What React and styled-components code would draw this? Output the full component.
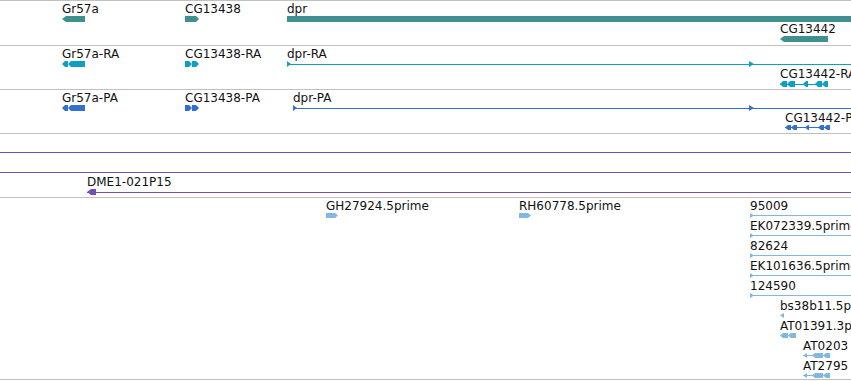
import React from "react";
import styled, { createGlobalStyle } from "styled-components";

const GlobalStyle = createGlobalStyle`
  html, body {
    margin: 0;
    padding: 0;
    background: #ffffff;
    overflow: hidden;
  }
  body {
    font-family: "DejaVu Sans", "Liberation Sans", sans-serif;
  }
`;

const Panel = styled.div`
  width: 851px;
  display: flex;
  flex-direction: column;
  overflow: hidden;
`;

const Track = styled.div`
  box-sizing: border-box;
  height: ${(p) => p.h}px;
  padding-top: 2px;
  border-top: 1px solid #c0c0c0;
  border-bottom: ${(p) => (p.last ? "1px solid #c0c0c0" : "none")};
  display: flex;
  flex-direction: column;
  overflow: hidden;
`;

// one packing row of a track; features sit at their genomic x inside it
const Row = styled.div`
  position: relative;
  flex: 0 0 20px;
  height: 20px;
`;

const FeatureBox = styled.div`
  position: absolute;
  left: ${(p) => p.x}px;
  top: 0;
  display: flex;
  flex-direction: column;
  gap: 1px;
`;

const Label = styled.span`
  display: block;
  height: 12px;
  font-size: 12px;
  line-height: 12px;
  color: #111;
  white-space: nowrap;
`;

const GlyphSvg = styled.svg`
  display: block;
  overflow: visible;
`;

const COLORS = {
  gene: "#409090",
  mrna: "#0ea0c0",
  protein: "#3470d0",
  bac: "#7050b0",
  est: "#80b8e0",
};

// polygon for an exon block; dir: left/right arrow, tri-left/tri-right triangle, none box
function shape(x0, x1, dir, h, tip = 3) {
  const m = h / 2;
  const w = x1 - x0;
  if (dir === "left")
    return `${x0},${m} ${x0 + tip},0 ${x1},0 ${x1},${h} ${x0 + tip},${h}`;
  if (dir === "right")
    return `${x0},0 ${x1 - tip},0 ${x1},${m} ${x1 - tip},${h} ${x0},${h}`;
  if (dir === "tri-right") return `${x0},0 ${x0 + w},${m} ${x0},${h}`;
  if (dir === "tri-left") return `${x1},0 ${x0},${m} ${x1},${h}`;
  return `${x0},0 ${x1},0 ${x1},${h} ${x0},${h}`;
}

function Feature({ x, label = "", color, parts = [], line, h = 6 }) {
  const ends = [...parts.map((p) => p[1]), line ? line[1] : 0];
  const width = Math.max(...ends) - x;
  return (
    <FeatureBox x={x}>
      <Label>{label}</Label>
      <GlyphSvg width={width} height={h}>
        {line && (
          <rect
            x={line[0] - x}
            y={Math.floor(h / 2)}
            width={line[1] - line[0]}
            height={1}
            fill={color}
          />
        )}
        {parts.map(([a, b, dir, tip], i) => (
          <polygon key={i} points={shape(a - x, b - x, dir, h, tip)} fill={color} />
        ))}
      </GlyphSvg>
    </FeatureBox>
  );
}

const twoExonsLeft = [
  [62, 68, "left"],
  [68, 85, "left"],
];
const twoExonsRight = [
  [185, 192, "right"],
  [192, 199, "right"],
];
const spliced = [
  [803, 807, "tri-left"],
  [812, 823, "left"],
  [823, 830, "left"],
];

const EstRow = ({ label, children }) => (
  <Row>
    {children}
    <Feature
      x={750}
      label={label}
      color={COLORS.est}
      h={5}
      line={[750, 900]}
      parts={[[750, 754, "tri-right"]]}
    />
  </Row>
);

export default function App() {
  return (
    <>
      <GlobalStyle />
      <Panel>
        <Track h={45}>
          <Row>
            <Feature x={62} label="Gr57a" color={COLORS.gene} parts={[[62, 85, "left", 4]]} />
            <Feature x={185} label="CG13438" color={COLORS.gene} parts={[[185, 199, "right"]]} />
            <Feature x={287} label="dpr" color={COLORS.gene} parts={[[287, 900, "none"]]} />
          </Row>
          <Row>
            <Feature x={780} label="CG13442" color={COLORS.gene} parts={[[780, 828, "left", 4]]} />
          </Row>
        </Track>

        <Track h={44}>
          <Row>
            <Feature x={62} label="Gr57a-RA" color={COLORS.mrna} parts={twoExonsLeft} />
            <Feature x={185} label="CG13438-RA" color={COLORS.mrna} parts={twoExonsRight} />
            <Feature
              x={287}
              label="dpr-RA"
              color={COLORS.mrna}
              line={[287, 900]}
              parts={[
                [287, 291, "tri-right"],
                [749, 754, "tri-right"],
              ]}
            />
          </Row>
          <Row>
            <Feature
              x={780}
              label="CG13442-RA"
              color={COLORS.mrna}
              line={[780, 828]}
              parts={[
                [780, 787, "left"],
                [787, 795, "left"],
                [803, 808, "left"],
                [815, 822, "left"],
                [822, 828, "left"],
              ]}
            />
          </Row>
        </Track>

        <Track h={44}>
          <Row>
            <Feature x={62} label="Gr57a-PA" color={COLORS.protein} parts={twoExonsLeft} />
            <Feature x={185} label="CG13438-PA" color={COLORS.protein} parts={twoExonsRight} />
            <Feature
              x={293}
              label="dpr-PA"
              color={COLORS.protein}
              line={[293, 900]}
              parts={[
                [293, 297, "tri-right"],
                [749, 754, "tri-right"],
              ]}
            />
          </Row>
          <Row>
            <Feature
              x={785}
              label="CG13442-PA"
              color={COLORS.protein}
              h={5}
              line={[785, 830]}
              parts={[
                [785, 791, "left"],
                [791, 797, "left"],
                [805, 809, "left"],
                [818, 824, "left"],
                [824, 830, "left"],
              ]}
            />
          </Row>
        </Track>

        <Track h={64}>
          <Row>
            <Feature x={0} color={COLORS.bac} line={[0, 900]} />
          </Row>
          <Row>
            <Feature x={0} color={COLORS.bac} line={[0, 900]} />
          </Row>
          <Row>
            <Feature
              x={87}
              label="DME1-021P15"
              color={COLORS.bac}
              line={[87, 900]}
              parts={[[87, 96, "left", 4]]}
            />
          </Row>
        </Track>

        <Track h={183} last>
          <EstRow label="95009">
            <Feature x={326} label="GH27924.5prime" color={COLORS.est} h={5} parts={[[326, 338, "right"]]} />
            <Feature x={519} label="RH60778.5prime" color={COLORS.est} h={5} parts={[[519, 531, "right"]]} />
          </EstRow>
          <EstRow label="EK072339.5prime" />
          <EstRow label="82624" />
          <EstRow label="EK101636.5prime" />
          <EstRow label="124590" />
          <Row>
            <Feature x={780} label="bs38b11.5prime" color={COLORS.est} h={5} parts={[[780, 784, "tri-left"]]} />
          </Row>
          <Row>
            <Feature
              x={780}
              label="AT01391.3prime"
              color={COLORS.est}
              h={5}
              parts={[
                [780, 788, "left"],
                [788, 796, "left"],
              ]}
            />
          </Row>
          <Row>
            <Feature x={803} label="AT0203" color={COLORS.est} h={5} line={[803, 830]} parts={spliced} />
          </Row>
          <Row>
            <Feature x={803} label="AT2795" color={COLORS.est} h={5} line={[803, 830]} parts={spliced} />
          </Row>
        </Track>
      </Panel>
    </>
  );
}
